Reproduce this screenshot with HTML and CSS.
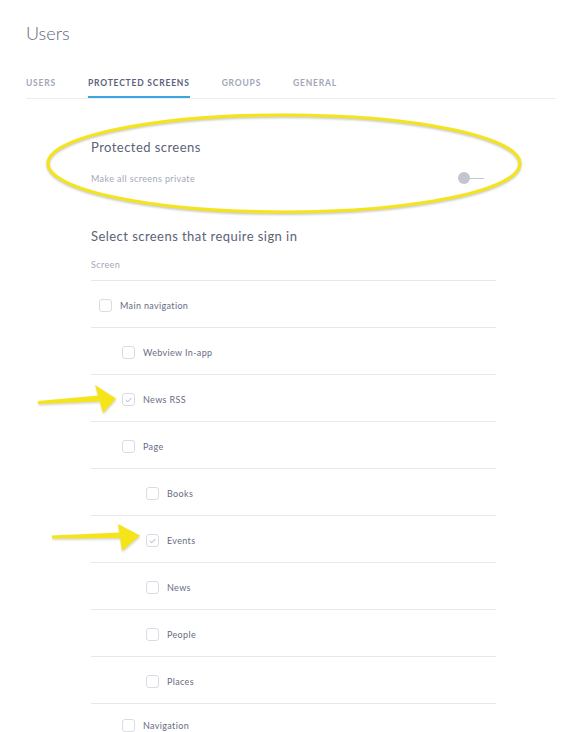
FILE: index.html
```html
<!DOCTYPE html>
<html>
<head>
<meta charset="utf-8">
<link rel="stylesheet" href="styles.css">
</head>
<body>
<div class="page">
  <h1 class="title">Users</h1>
  <nav class="tabs">
    <span class="tab">USERS</span>
    <span class="tab active">PROTECTED SCREENS</span>
    <span class="tab">GROUPS</span>
    <span class="tab">GENERAL</span>
  </nav>
  <main class="content">
    <section class="setting">
      <h2 class="heading">Protected screens</h2>
      <div class="setting-row">
        <span class="muted">Make all screens private</span>
        <span class="toggle"><span class="knob"></span><span class="track"></span></span>
      </div>
    </section>
    <section class="screens">
      <h2 class="heading">Select screens that require sign in</h2>
      <div class="col-head muted">Screen</div>
      <ul class="list">
        <li class="row l0"><span class="cb"></span><span class="label">Main navigation</span></li>
        <li class="row l1"><span class="cb"></span><span class="label">Webview In-app</span></li>
        <li class="row l1"><span class="cb checked"><svg viewBox="0 0 12 12" width="12" height="12"><path d="M3.3 6.2 L5.2 8 L8.8 4.2" fill="none" stroke="#9ba0b1" stroke-width="0.9" stroke-linecap="round" stroke-linejoin="round"/></svg></span><span class="label">News RSS</span></li>
        <li class="row l1"><span class="cb"></span><span class="label">Page</span></li>
        <li class="row l2"><span class="cb"></span><span class="label">Books</span></li>
        <li class="row l2"><span class="cb checked"><svg viewBox="0 0 12 12" width="12" height="12"><path d="M3.3 6.2 L5.2 8 L8.8 4.2" fill="none" stroke="#9ba0b1" stroke-width="0.9" stroke-linecap="round" stroke-linejoin="round"/></svg></span><span class="label">Events</span></li>
        <li class="row l2"><span class="cb"></span><span class="label">News</span></li>
        <li class="row l2"><span class="cb"></span><span class="label">People</span></li>
        <li class="row l2"><span class="cb"></span><span class="label">Places</span></li>
        <li class="row l1 last"><span class="cb"></span><span class="label">Navigation</span></li>
      </ul>
    </section>
  </main>
</div>
<svg class="annotations" width="570" height="732" viewBox="0 0 570 732">
  <defs>
    <filter id="sh" x="-10%" y="-30%" width="120%" height="160%">
      <feGaussianBlur stdDeviation="1"/>
    </filter>
  </defs>
  <ellipse cx="284" cy="165" rx="236" ry="48.5" fill="none" stroke="#b9b9b0" stroke-width="3" filter="url(#sh)" opacity="0.8"/>
  <ellipse cx="284" cy="163.5" rx="236" ry="48.5" fill="none" stroke="#f6e41a" stroke-width="3.2"/>
  <g filter="url(#sh)" fill="#c4c2b0" opacity="0.7" transform="translate(0.5,1.5)">
    <path d="M38 401 L38 404 L99 401.5 L99 395.5 Z"/>
    <path d="M95 385 L116 398.5 L103 413 Z"/>
    <path d="M52 535.5 L52 538.5 L121 538 L121 532.5 Z"/>
    <path d="M118 524 L140 535.5 L122 551 Z"/>
  </g>
  <g fill="#f6e41a">
    <path d="M38 401 L38 404 L99 401.5 L99 395.5 Z"/>
    <path d="M95 385 L116 398.5 L103 413 Z"/>
    <path d="M52 535.5 L52 538.5 L121 538 L121 532.5 Z"/>
    <path d="M118 524 L140 535.5 L122 551 Z"/>
  </g>
</svg>
</body>
</html>
```

FILE: styles.css
```css
* { box-sizing: border-box; }
html, body { margin: 0; padding: 0; background: #ffffff; }
body {
  font-family: Lato, "Open Sans", sans-serif;
  color: #5c6277;
  width: 570px;
  height: 732px;
  overflow: hidden;
  position: relative;
}
.page {
  padding: 22px 14px 0 26px;
}
.title {
  margin: 0;
  font-size: 18px;
  line-height: 22px;
  font-weight: 300;
  color: #5e6479;
}
.tabs {
  display: flex;
  gap: 32px;
  margin-top: 34px;
  border-bottom: 1px solid #eceef2;
}
.tab {
  font-size: 8.5px;
  line-height: 10px;
  letter-spacing: 0.8px;
  font-weight: 700;
  color: #a2a6b6;
  padding-bottom: 8px;
  border-bottom: 2px solid transparent;
}
.tab.active {
  color: #5c6277;
  border-bottom-color: #3ba7df;
}
.content {
  margin-left: 65px;
  width: 405px;
}
.heading {
  margin: 0;
  font-size: 13px;
  line-height: 16px;
  font-weight: 400;
  letter-spacing: 0.45px;
  color: #5c6277;
}
.setting {
  margin-top: 40px;
}
.setting-row {
  margin-top: 15px;
  height: 16px;
  display: flex;
  align-items: center;
  justify-content: space-between;
}
.muted {
  font-size: 9px;
  letter-spacing: 0.4px;
  color: #a4a8b8;
}
.toggle {
  display: flex;
  align-items: center;
  margin-right: 12px;
}
.knob {
  width: 12px;
  height: 12px;
  border-radius: 50%;
  background: #c3c6d1;
}
.track {
  width: 14px;
  height: 1px;
  background: #c3c6d1;
}
.screens {
  margin-top: 42px;
}
.col-head {
  margin-top: 15px;
  line-height: 12px;
  padding-bottom: 9px;
  border-bottom: 1px solid #e6e8ec;
}
.list {
  list-style: none;
  margin: 0;
  padding: 0;
}
.row {
  height: 47px;
  padding-top: 3px;
  display: flex;
  align-items: center;
  gap: 8px;
  border-bottom: 1px solid #e6e8ec;
}
.row.last {
  align-items: flex-start;
  padding-top: 15px;
}
.row.l0 { padding-left: 8px; }
.row.l1 { padding-left: 31px; }
.row.l2 { padding-left: 55px; }
.cb {
  width: 13px;
  height: 13px;
  border: 1px solid #d9dce3;
  border-radius: 3px;
  background: #fff;
  display: flex;
  align-items: center;
  justify-content: center;
  flex: none;
}
.cb svg { display: block; }
.label {
  font-size: 9px;
  line-height: 13px;
  letter-spacing: 0.35px;
  color: #676c82;
}
.annotations {
  position: absolute;
  left: 0;
  top: 0;
  pointer-events: none;
}
```
